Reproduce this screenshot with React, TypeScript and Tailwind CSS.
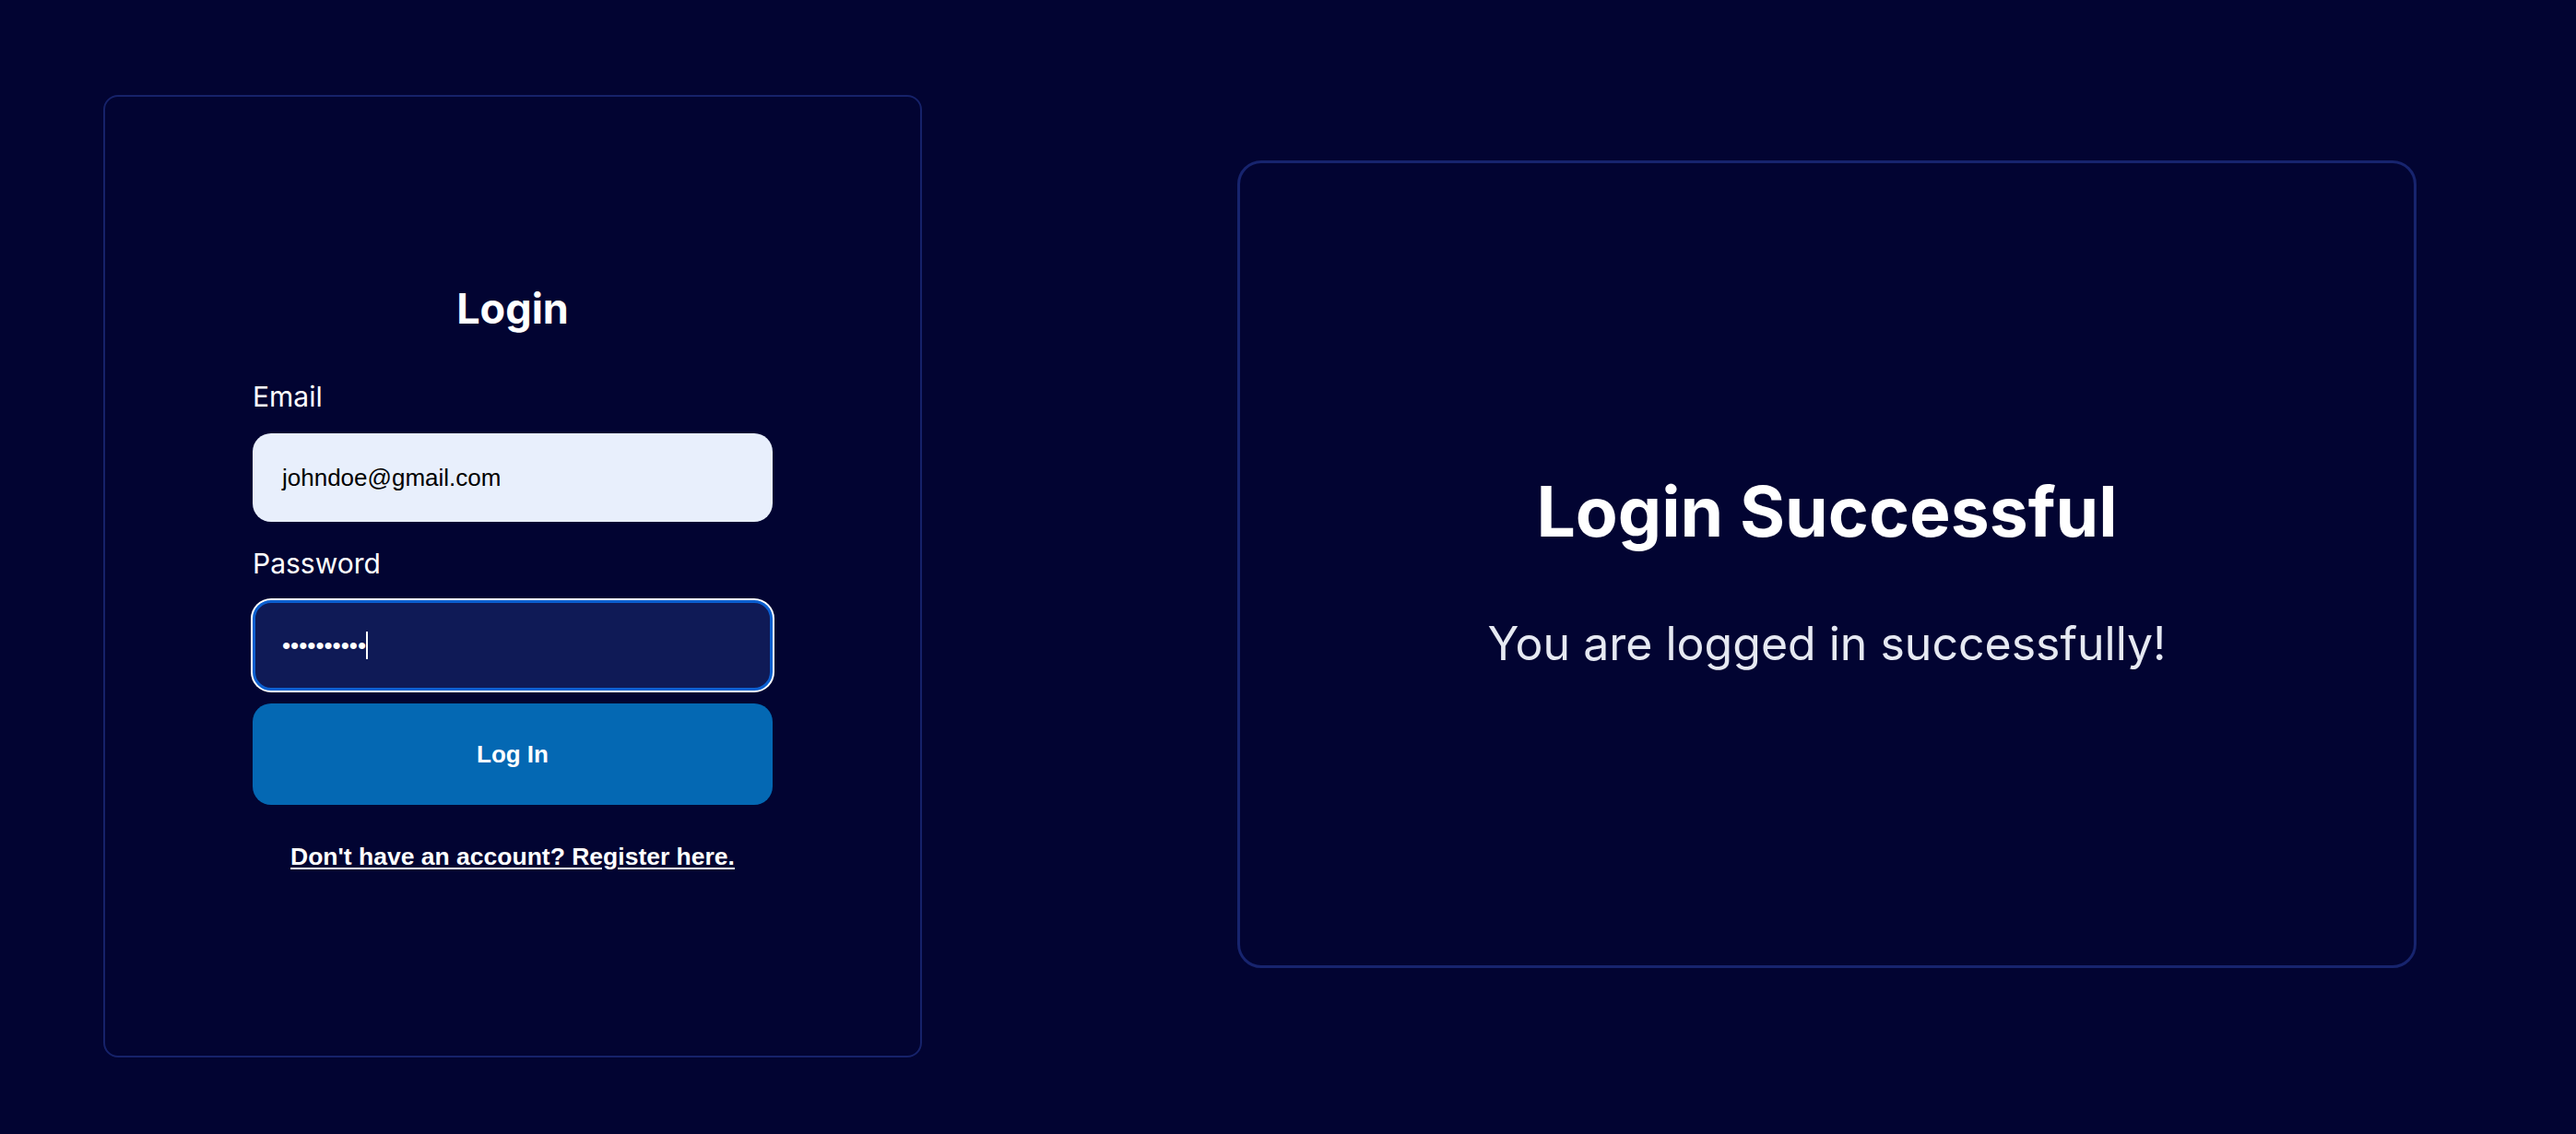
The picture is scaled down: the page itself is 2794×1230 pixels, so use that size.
export default function App() {
    return (
        <div className="w-[2794px] h-[1230px] bg-[#020432] flex items-start pl-[112px] overflow-hidden" style={{ fontFamily: "Inter, 'Noto Sans', sans-serif" }}>
            <LoginCard />
            <SuccessCard />
        </div>
    );
}

function LoginCard() {
    return (
        <section className="mt-[103px] w-[888px] h-[1044px] shrink-0 rounded-[16px] border-2 border-[#16226a] bg-[#020432] flex flex-col items-center justify-center pt-[10px]">
            <div className="w-[564px] flex flex-col">
                <h2 className="text-center text-white font-bold text-[45px] leading-[50px] mb-[50px]">Login</h2>

                <label className="text-white text-[30px] leading-[40px] mb-[20px]">Email</label>
                <div className="h-[96px] rounded-[20px] bg-[#e8effc] flex items-center px-[32px] text-black text-[26px] font-['Liberation_Sans',Arial,sans-serif]">
                    johndoe@gmail.com
                </div>

                <label className="text-white text-[30px] leading-[40px] mt-[25px] mb-[20px]">Password</label>
                <div className="h-[98px] rounded-[20px] bg-[#0f1a56] border-[3px] border-[#0b5fd0] shadow-[0_0_0_2px_#ffffff] flex items-center px-[29px] text-white text-[26px] font-['Liberation_Sans',Arial,sans-serif]">
                    <span>••••••••••</span>
                    <span className="w-[2px] h-[30px] bg-white"></span>
                </div>

                <button className="mt-[14px] h-[110px] rounded-[20px] bg-[#0468b3] text-white text-[26px] font-bold font-['Liberation_Sans',Arial,sans-serif]">
                    Log In
                </button>

                <a href="#" className="mt-[37px] text-center text-white text-[26.5px] font-bold underline underline-offset-[3px] font-['Liberation_Sans',Arial,sans-serif]">
                    Don't have an account? Register here.
                </a>
            </div>
        </section>
    );
}

function SuccessCard() {
    return (
        <section className="ml-[342px] mt-[174px] w-[1279px] h-[876px] shrink-0 rounded-[26px] border-[3px] border-[#17246e] bg-[#020432] flex flex-col items-center justify-center pt-[14px]">
            <h1 className="text-white font-bold text-[75px] leading-[90px]">Login Successful</h1>
            <p className="mt-[67px] text-[#e6e9f2] text-[50px] leading-[62px]">You are logged in successfully!</p>
        </section>
    );
}
